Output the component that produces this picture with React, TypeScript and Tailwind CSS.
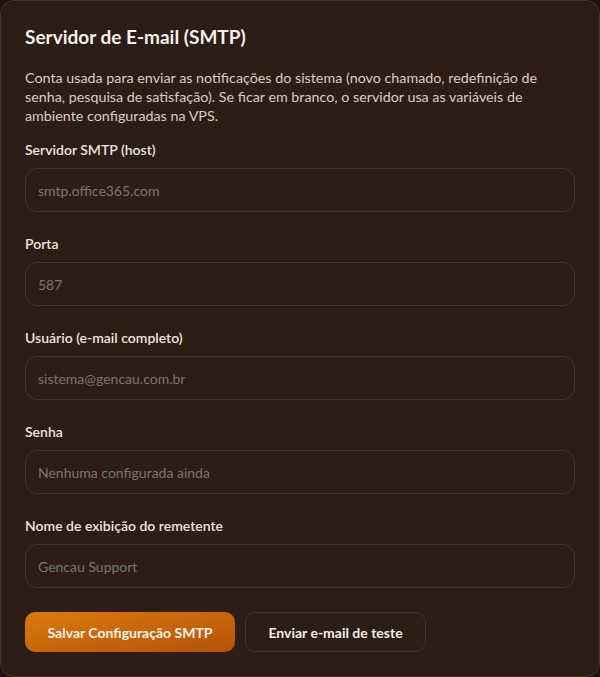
const fields = [
  { label: 'Servidor SMTP (host)', placeholder: 'smtp.office365.com' },
  { label: 'Porta', placeholder: '587' },
  { label: 'Usuário (e-mail completo)', placeholder: 'sistema@gencau.com.br' },
  { label: 'Senha', placeholder: 'Nenhuma configurada ainda', type: 'password' },
  { label: 'Nome de exibição do remetente', placeholder: 'Gencau Support' },
]

export default function App() {
  return (
    <div className="w-[600px] h-[677px] bg-[#1e1511] font-['Lato','Noto_Sans',sans-serif]">
      <div className="h-full rounded-[14px] border border-[#4a3529] bg-[#2c1d17] px-6 pt-[25px]">
        <h2 className="text-[19px] font-bold text-[#f5f0ec] leading-[22px]">Servidor de E-mail (SMTP)</h2>

        <p className="mt-[20px] text-[14.3px] leading-[19px] text-[#d8cdc5] pr-2">
          Conta usada para enviar as notificações do sistema (novo chamado, redefinição de senha, pesquisa de
          satisfação). Se ficar em branco, o servidor usa as variáveis de ambiente configuradas na VPS.
        </p>

        <div className="mt-[16px] flex flex-col gap-[23px]">
          {fields.map((f) => (
            <div key={f.label} className="flex flex-col gap-[9px]">
              <label className="text-[14px] font-semibold text-[#ece4de] leading-[18px]">{f.label}</label>
              <input
                type={f.type ?? 'text'}
                placeholder={f.placeholder}
                className="h-[44px] w-full rounded-[12px] border border-[#4a3529] bg-[#2c1d17] px-3 text-[14px] text-[#e8e0da] placeholder:text-[#7d7571] outline-none"
              />
            </div>
          ))}
        </div>

        <div className="mt-[24px] flex gap-[10px]">
          <button className="h-[40px] w-[210px] rounded-[10px] bg-gradient-to-br from-[#dc7a0c] to-[#b4520a] text-[14px] font-bold text-[#fbf3ea]">
            Salvar Configuração SMTP
          </button>
          <button className="h-[40px] w-[181px] rounded-[10px] border border-[#4a3529] text-[14px] font-bold text-[#f1ece8]">
            Enviar e-mail de teste
          </button>
        </div>
      </div>
    </div>
  )
}
